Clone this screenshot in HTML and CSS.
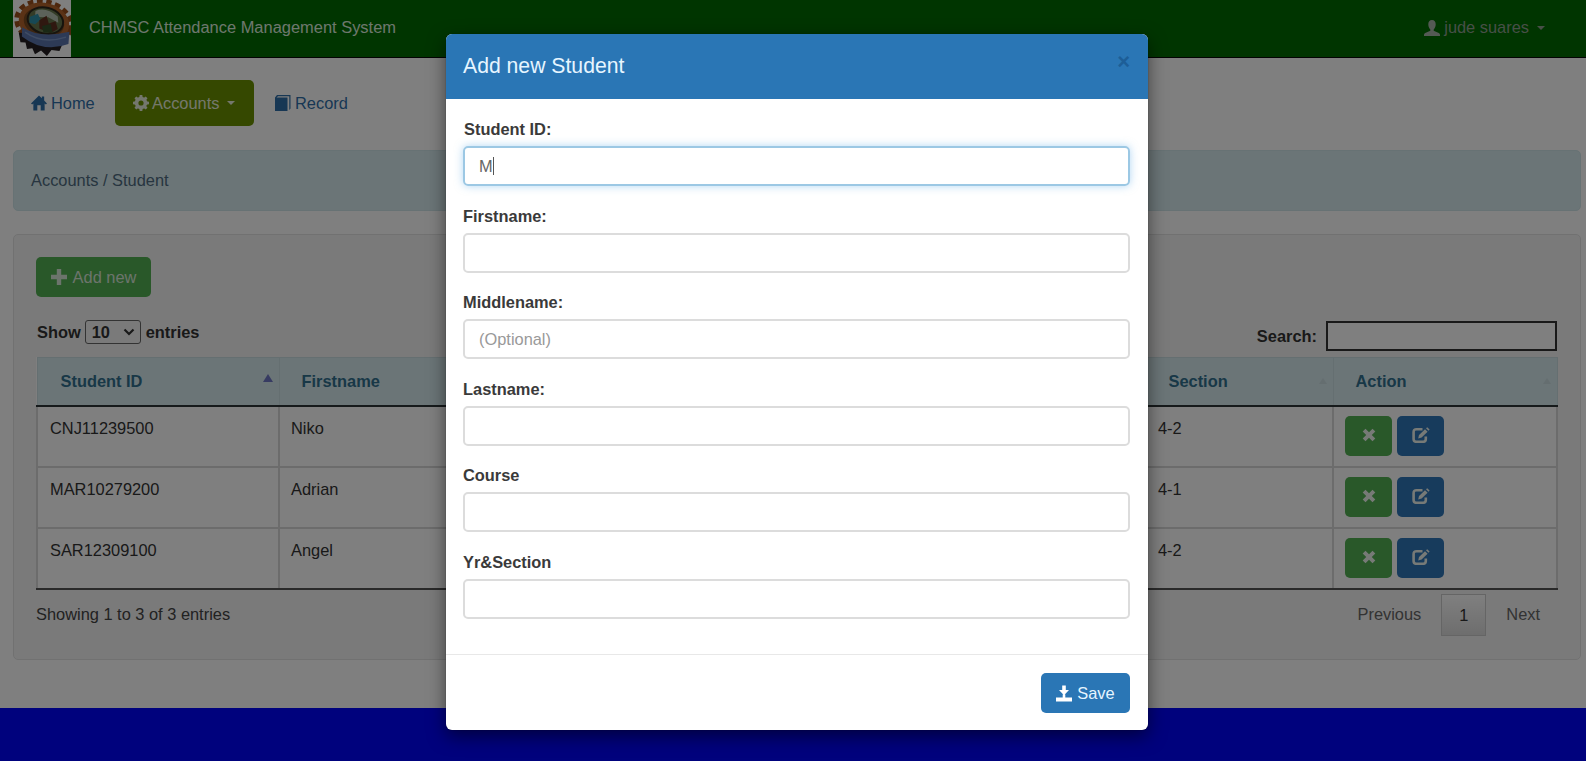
FILE: index.html
```html
<!DOCTYPE html>
<html lang="en">
<head>
<meta charset="utf-8">
<title>CHMSC Attendance Management System</title>
<link rel="stylesheet" href="styles.css">
</head>
<body>
<svg width="0" height="0" class="defs">
  <defs>
    <symbol id="i-remove" viewBox="0 0 16 16"><path d="M4 .8 8 4.8 12 .8 15.2 4 11.2 8 15.2 12 12 15.2 8 11.2 4 15.2 .8 12 4.8 8 .8 4z"/></symbol>
    <symbol id="i-edit" viewBox="0 0 18 16"><path d="M10.5 2.2H4.5Q1.6 2.2 1.6 5V12Q1.6 14.8 4.5 14.8H11Q13.8 14.8 13.8 12V9.5" fill="none" stroke="currentColor" stroke-width="2.6"/><path d="M6.2 11.4 7 8 13 2.2 15.6 4.8 9.6 10.6zM14 1.3 15.2.2 17.6 2.6 16.5 3.8z"/></symbol>
    <symbol id="i-user" viewBox="0 0 16 16"><path d="M8 0C5.500 0 4.300 1.700 4.300 4.200 4.300 6.500 5.200 8.400 6.300 9.600V10.800L1.200 13.100Q0 13.700 0 14.800V16H16V14.800Q16 13.700 14.800 13.100L9.700 10.800V9.600C10.800 8.400 11.700 6.500 11.700 4.200 11.700 1.700 10.500 0 8 0z"/></symbol>
  </defs>
</svg>
<div class="page">
  <header class="navbar">
    <svg class="logo" viewBox="0 0 58 57">
      <rect width="58" height="57" fill="#fff"/>
      <g transform="rotate(14 29 26)">
        <ellipse cx="30" cy="22" rx="27" ry="20" fill="none" stroke="#9a4e1c" stroke-width="6" stroke-dasharray="5.500 3.500"/>
        <ellipse cx="30" cy="22" rx="23" ry="17" fill="#7a4a20" stroke="#b4642c" stroke-width="5"/>
        <ellipse cx="31" cy="20" rx="18" ry="13" fill="#68794e" stroke="#2f281c" stroke-width="2"/>
        <path d="M19 13Q28 6 42 13L44 19 33 16 20 19z" fill="#b9c4b4"/>
        <path d="M15 20 22 15 26 20 22 26 16 26z" fill="#2f91a8"/>
        <path d="M25 21 31 15 35 22 41 18 45 25 39 31 27 29z" fill="#5f3020"/>
        <path d="M29 26 37 22 41 30 32 32z" fill="#34502b"/>
        <path d="M8 38 12 47 17 46 20 52 25 50 29 55 34 50 41 54 44 47 52 46 54 34z" fill="#241f22"/>
        <path d="M10 32Q30 39 57 25L59 37Q37 52 12 41z" fill="#5a74ac"/>
        <path d="M14 36Q34 44 55 31" fill="none" stroke="#7f98c8" stroke-width="1.500"/>
      </g>
    </svg>
    <span class="brand">CHMSC Attendance Management System</span>
    <span class="user"><svg class="ico-user"><use href="#i-user"/></svg><span class="uname">jude suares</span><i class="caret"></i></span>
  </header>
  <nav class="pills">
    <a class="pill home"><svg class="ico16" viewBox="0 0 17 16"><path d="M8.500 0 0 8.400 1.200 9.600 2.500 8.400V16H6.700V10.500H10.300V16H14.500V8.400L15.800 9.600 17 8.400 14 5.400V1H11.500V3z"/></svg><span>Home</span></a>
    <a class="pill active"><svg class="ico16" viewBox="0 0 16 16"><circle cx="8" cy="8" r="4.400" fill="none" stroke="currentColor" stroke-width="3.600"/><path d="M6.700 0H9.300L9.800 3H6.200zM6.700 16H9.300L9.800 13H6.200zM0 6.700V9.300L3 9.800V6.200zM16 6.700V9.300L13 9.800V6.200zM1.500 3.300 3.300 1.500 6 3.500 3.500 6zM14.500 12.700 12.700 14.500 10 12.500 12.500 10zM14.500 3.300 12.700 1.500 10 3.500 12.500 6zM1.500 12.700 3.300 14.500 6 12.500 3.500 10z"/></svg><span>Accounts</span><i class="caret"></i></a>
    <a class="pill record"><svg class="ico16" viewBox="0 0 16 16"><path d="M2 0H15.500V13.500L14.300 15V1.300H3L1.600 2.500H12.500V16H0V2.500z"/></svg><span>Record</span></a>
  </nav>
  <div class="alert">Accounts / Student</div>
  <main class="well">
    <button class="btn success add"><svg class="ico16" viewBox="0 0 16 16"><path d="M5.800 0H10.200V5.800H16V10.200H10.200V16H5.800V10.200H0V5.800H5.800z"/></svg><span>Add new</span></button>
    <div class="controls">
      <label class="length"><span class="t-show">Show</span><span class="select"><span>10</span><svg viewBox="0 0 12 8"><path d="M1.500 1.500 6 6 10.500 1.500" fill="none" stroke="currentColor" stroke-width="2.200"/></svg></span><span class="t-ent">entries</span></label>
      <label class="search"><span>Search:</span><input type="text"></label>
    </div>
    <table class="data">
      <colgroup><col class="c1"><col class="c2"><col class="c3"><col class="c4"></colgroup>
      <thead><tr><th class="lead"><div class="th"><span>Student ID</span><i class="sort-up"></i></div></th><th>Firstname</th><th><div class="th"><span>Section</span><i class="sort"></i></div></th><th><div class="th"><span>Action</span><i class="sort"></i></div></th></tr></thead>
      <tbody>
        <tr><td>CNJ11239500</td><td>Niko</td><td>4-2</td><td><div class="acts"><button class="btn success sq"><svg class="ico-x"><use href="#i-remove"/></svg></button><button class="btn primary sq"><svg class="ico-e"><use href="#i-edit"/></svg></button></div></td></tr>
        <tr><td>MAR10279200</td><td>Adrian</td><td>4-1</td><td><div class="acts"><button class="btn success sq"><svg class="ico-x"><use href="#i-remove"/></svg></button><button class="btn primary sq"><svg class="ico-e"><use href="#i-edit"/></svg></button></div></td></tr>
        <tr><td>SAR12309100</td><td>Angel</td><td>4-2</td><td><div class="acts"><button class="btn success sq"><svg class="ico-x"><use href="#i-remove"/></svg></button><button class="btn primary sq"><svg class="ico-e"><use href="#i-edit"/></svg></button></div></td></tr>
      </tbody>
    </table>
    <div class="tfoot">
      <span class="info">Showing 1 to 3 of 3 entries</span>
      <span class="pager"><a>Previous</a><a class="cur">1</a><a>Next</a></span>
    </div>
  </main>
  <footer class="bottom"></footer>
</div>
<div class="backdrop">
  <form class="modal">
    <div class="m-head"><h4>Add new Student</h4><span class="close">×</span></div>
    <div class="m-body">
      <div class="group"><label class="first">Student ID:</label><div class="field focus"><span>M</span><i class="cursor"></i></div></div>
      <div class="group"><label>Firstname:</label><div class="field"></div></div>
      <div class="group"><label>Middlename:</label><div class="field hint">(Optional)</div></div>
      <div class="group"><label>Lastname:</label><div class="field"></div></div>
      <div class="group"><label>Course</label><div class="field"></div></div>
      <div class="group"><label>Yr&amp;Section</label><div class="field"></div></div>
    </div>
    <div class="m-foot"><button type="button" class="btn save"><svg class="ico-save" viewBox="0 0 16 16"><path d="M6.200 0H9.800V4.500H13L8 9.800 3 4.500H6.200zM6.700 9H9.300V12H16V16H0V12H6.700z"/></svg><span>Save</span></button></div>
  </form>
</div>
</body>
</html>
```
FILE: styles.css
```css
* { box-sizing: border-box; }
body {
  margin: 0;
  height: 761px;
  overflow: hidden;
  background: #fff;
  color: #333;
  font: 16.4px/23px "Liberation Sans", Arial, sans-serif;
}
svg { fill: currentColor; flex: none; display: block; }
.defs { position: absolute; }
.page { height: 761px; display: flex; flex-direction: column; }

/* top bar */
.navbar {
  height: 58px;
  flex: none;
  display: flex;
  align-items: flex-start;
  padding: 0 41px 0 13px;
  background: #006a00;
  border-bottom: 1px solid #060606;
}
.logo { width: 58px; height: 57px; }
.brand { margin: 16px 0 0 18px; font-size: 16.45px; color: #ddeedd; white-space: nowrap; }
.user { margin: 16px 0 0 auto; display: flex; align-items: center; color: #8f9f8f; }
.ico-user { width: 16px; height: 16px; margin-right: 4px; color: #a9b4a9; }
.caret {
  border: 4.500px solid transparent;
  border-top-color: currentColor;
  border-bottom: 0;
  margin-left: 8px;
}

/* section tabs */
.pills { display: flex; height: 46px; flex: none; margin: 22px 0 24px 13px; color: #2f6fa8; }
.pill { display: flex; align-items: center; padding: 0 18px; }
.pill span { margin-left: 4px; }
.ico16 { width: 16px; height: 16px; }
.home { width: 102px; padding-right: 0; }
.active { width: 139px; background: #6a9000; color: #e9efda; border-radius: 5px; padding-right: 0; }
.active span { margin-left: 3px; }
.record { margin-left: 3px; }

.alert {
  height: 61px;
  flex: none;
  margin: 0 5px 23px 13px;
  padding: 18px 17px;
  border: 1px solid #cfe5e9;
  border-radius: 5px;
  background: #d6eaee;
  color: #4f6b80;
}

/* content panel */
.well {
  height: 426px;
  flex: none;
  margin: 0 5px 0 13px;
  padding: 22px 23px 0 22px;
  background: #f5f5f5;
  border: 1px solid #e3e3e3;
  border-radius: 5px;
}
.btn {
  display: flex;
  align-items: center;
  justify-content: center;
  border: 0;
  border-radius: 5px;
  height: 40px;
  padding: 0;
  color: #eef5ee;
  font: inherit;
}
.success { background: #52b052; }
.primary { background: #2f76b8; }
.add { width: 115px; color: #d9e8d9; }
.add span { margin-left: 6px; }
.controls { display: flex; justify-content: space-between; height: 60px; font-weight: 700; color: #333; }
.length { display: flex; align-items: center; height: 24px; margin: 23px 0 0 1px; }
.select {
  display: flex;
  align-items: center;
  justify-content: space-between;
  width: 56px;
  height: 24px;
  margin: 0 5px 0 4px;
  padding: 0 5px 0 6px;
  border: 1px solid #666;
  border-radius: 3px;
}
.select svg { width: 12px; height: 8px; }
.search { display: flex; align-items: center; height: 30px; margin-top: 24px; gap: 9px; }
.search input { width: 231px; height: 30px; border: 2px solid #333; background: #fff; }

.data { width: 1520px; border-collapse: collapse; table-layout: fixed; background: #fff; }
.c1 { width: 242px; }
.c2 { width: 867px; }
.c3 { width: 187px; }
.c4 { width: 224px; }
.data th {
  height: 48px;
  padding: 0 6px 0 22px;
  text-align: left;
  background: #d6eaee;
  color: #31708f;
  border: 1px solid #cbdfe3;
  border-bottom: 2px solid #2d3436;
}
.data .lead { padding-left: 23px; }
.th { display: flex; justify-content: space-between; align-items: center; }
.sort-up { border: 5px solid transparent; border-bottom: 8px solid #6f77c4; border-top: 0; margin-top: -7px; }
.sort { border: 4px solid transparent; border-bottom: 6px solid #cbdde1; border-top: 0; }
.data td {
  height: 61px;
  padding: 10px 11px 0;
  vertical-align: top;
  border: 2px solid #d8d8d8;
}
.data td:first-child { padding-left: 12px; }
.data tr:last-child td { border-bottom: 2px solid #555; }
.acts { display: flex; gap: 5px; margin-top: -1px; }
.sq { width: 47px; height: 40px; }
.ico-x { width: 14px; height: 14px; margin-top: -2px; }
.ico-e { width: 18px; height: 16px; margin-top: -2px; }
.tfoot { display: flex; justify-content: space-between; color: #444; }
.info { margin-top: 13px; }
.pager { display: flex; align-items: center; margin-top: 4px; color: #666; padding-right: 17px; gap: 20px; }
.cur {
  width: 45px;
  height: 42px;
  line-height: 41px;
  text-align: center;
  color: #333;
  border: 1px solid #cacaca;
  background: linear-gradient(#fff, #dcdcdc);
}
.bottom { margin-top: auto; height: 53px; flex: none; background: #0004fa; }

/* dialog */
.backdrop { position: absolute; inset: 0; background: rgba(0, 0, 0, .5); }
.modal {
  width: 702px;
  height: 696px;
  margin: 34px 0 0 446px;
  background: #fff;
  border-radius: 6px;
  box-shadow: 0 6px 18px rgba(0, 0, 0, .5), 0 0 1px rgba(0, 0, 0, .6);
}
.m-head {
  height: 65px;
  display: flex;
  justify-content: space-between;
  padding: 18px 18px 0 17px;
  background: #2a76b5;
  border-radius: 6px 6px 0 0;
}
.m-head h4 { margin: 0; font-weight: 400; font-size: 21.2px; line-height: 27px; color: #e6f5ff; }
.close { font-size: 22px; font-weight: 700; line-height: 20px; color: #1d5e97; }
.m-body { height: 556px; padding: 19px 18px 0 17px; border-bottom: 1px solid #e8e8e8; }
.group { height: 86.500px; font-weight: 700; }
.group label { display: block; height: 28px; line-height: 22px; color: #3a3a3a; }
.group .first { padding-left: 1px; }
.field {
  display: flex;
  align-items: center;
  height: 40px;
  padding: 0 14px;
  border: 2px solid #dcdcdc;
  border-radius: 5px;
  font-weight: 400;
}
.focus { border-color: #9cc8e4; box-shadow: 0 0 9px rgba(102, 175, 233, .5); color: #666; }
.cursor { width: 1px; height: 18px; background: #555; }
.hint { color: #999; }
.m-foot { display: flex; justify-content: flex-end; padding: 18px 18px 0; }
.save { width: 89px; background: #2a76b5; color: #e6f5ff; }
.ico-save { width: 16px; height: 17px; color: #fff; margin-right: 5px; }
```
